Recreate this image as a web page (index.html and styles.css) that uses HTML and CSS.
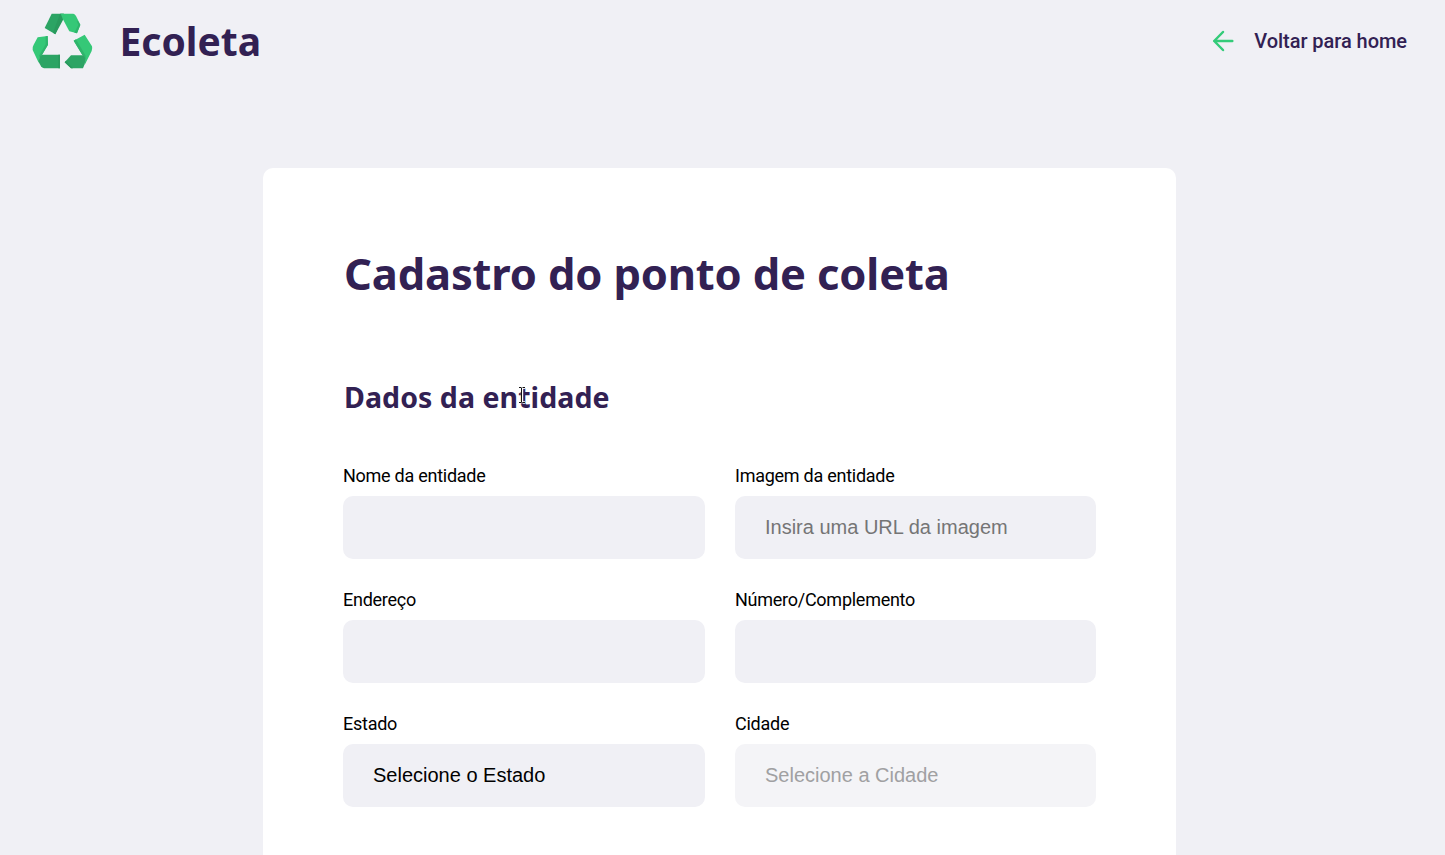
FILE: index.html
```html
<!DOCTYPE html>
<html lang="pt-BR">
<head>
<meta charset="utf-8">
<title>Ecoleta</title>
<link rel="stylesheet" href="styles.css">
</head>
<body>
<header class="header">
  <div class="brand">
    <svg class="brand-mark" viewBox="29 25 183 168" aria-hidden="true">
      <path fill="#2ca464" d="M88 27H124L99 89 67 70Z"/>
      <path fill="#299a5d" d="M113 27H125L122 46 99 89 92 84Z"/>
      <path fill="#35c877" d="M115 27H153Q158 28 161 34L174 60 164 86 141 80 121 42Z"/>
      <path fill="#2fb56c" d="M163 48L169 51 174 61 164 86 156 84 168 61Z"/>
      <path fill="#35c877" d="M46 98L76 94 77 120 51 164 49 174 31 136Q29 128 34 120Z"/>
      <path fill="#2fb56c" d="M70 95L76 94 77 120 54 159 50 153 70 119Z"/>
      <path fill="#2ca464" d="M59 150H113V191H65Q59 190 56 185L49 172Q49 159 59 150Z"/>
      <path fill="#299a5d" d="M108 150H113V191H108Z"/>
      <path fill="#35c877" d="M154 108L187 90 209 125Q211 131 208 139L187 181 189 165Z"/>
      <path fill="#2fb56c" d="M154 108L161 104 190 153 189 176 184 158Z"/>
      <path fill="#2ca464" d="M146 152H180Q189 155 189 166T182 191H146L127 173Z"/>
      <path fill="#299a5d" d="M127 173L131 168 152 191H146Z"/>
    </svg>
    <span class="brand-name">Ecoleta</span>
  </div>
  <a class="back">
    <svg class="back-icon" viewBox="0 0 22 22" aria-hidden="true"><path d="M20.3 11H2.2M11 2L2.2 11 11 20"/></svg>
    <span>Voltar para home</span>
  </a>
</header>
<main class="card">
  <h1 class="title">Cadastro do ponto de coleta</h1>
  <h2 class="subtitle"><span>Dados da entidade</span>
    <svg class="caret" viewBox="0 0 8 18" aria-hidden="true"><path class="caret-edge" d="M1 1.5H3.5M4.5 1.5H7M4 2V16M1 16.5H3.5M4.5 16.5H7"/><path class="caret-line" d="M1 1.5H3.5M4.5 1.5H7M3.5 2V16M1 16.5H3.5M4.5 16.5H7"/></svg>
  </h2>
  <form class="fields">
    <label class="field">Nome da entidade<input class="control" type="text"></label>
    <label class="field">Imagem da entidade<input class="control" type="text" placeholder="Insira uma URL da imagem"></label>
    <label class="field">Endereço<input class="control" type="text"></label>
    <label class="field">Número/Complemento<input class="control" type="text"></label>
    <label class="field">Estado<select class="control"><option>Selecione o Estado</option></select></label>
    <label class="field">Cidade<select class="control" disabled><option>Selecione a Cidade</option></select></label>
  </form>
</main>
</body>
</html>
```

FILE: styles.css
```css
* { box-sizing: border-box; margin: 0; padding: 0; }

body {
  display: flex;
  flex-direction: column;
  height: 855px;
  overflow: hidden;
  background: #f0f0f5;
  font-family: Roboto, sans-serif;
}

.header {
  display: flex;
  flex: none;
  justify-content: space-between;
  align-items: center;
  height: 82px;
  padding: 0 38px 1px 31.5px;
}

.brand { display: flex; align-items: center; gap: 27px; }
.brand-mark { display: block; width: 61px; height: 56px; }

.brand-name, .title, .subtitle {
  font-family: "Noto Sans", "Open Sans", sans-serif;
  font-weight: 700;
  color: #322153;
  white-space: nowrap;
}
.brand-name { font-size: 39px; line-height: 56px; }

.back {
  display: flex;
  align-items: center;
  gap: 20px;
  padding-top: 1px;
  color: #322153;
  font-size: 20px;
  font-weight: 500;
  letter-spacing: -0.05px;
}
.back-icon {
  width: 22px;
  height: 22px;
  fill: none;
  stroke: #34cb79;
  stroke-width: 2.5;
  stroke-linecap: round;
  stroke-linejoin: round;
}

.card {
  flex: 1;
  width: 913px;
  min-height: 0;
  margin: 86px 0 0 263px;
  padding: 79px 80px 0;
  border-radius: 10px 10px 0 0;
  background: #fff;
}

.title {
  padding-left: 1px;
  font-size: 43.5px;
  line-height: 52px;
  letter-spacing: -0.16px;
}
.subtitle {
  position: relative;
  margin-top: 78px;
  padding-left: 1px;
  font-size: 28.5px;
  line-height: 40px;
  letter-spacing: 0.06px;
}
.caret {
  position: absolute;
  left: 175px;
  top: 9px;
  width: 8px;
  height: 18px;
  fill: none;
}
.caret-edge { stroke: #fff; stroke-width: 2.4; }
.caret-line { stroke: #111; stroke-width: 1; }

.fields {
  display: grid;
  grid-template-columns: 362px 361px;
  gap: 30px;
  margin-top: 48px;
}
.field {
  display: flex;
  flex-direction: column;
  gap: 10px;
  color: #000;
  font-size: 18px;
  line-height: 21px;
  letter-spacing: -0.26px;
}
.control {
  width: 100%;
  height: 63px;
  padding: 0 30px;
  border: 0;
  border-radius: 10px;
  background: #f0f0f5;
  color: #000;
  font: 20px "Liberation Sans", Arial, sans-serif;
  appearance: none;
}
select.control { padding-bottom: 2px; }
.control::placeholder { color: #757575; opacity: 1; }
.control:disabled { background: #f4f4f7; color: #a0a0a2; opacity: 1; }
```
